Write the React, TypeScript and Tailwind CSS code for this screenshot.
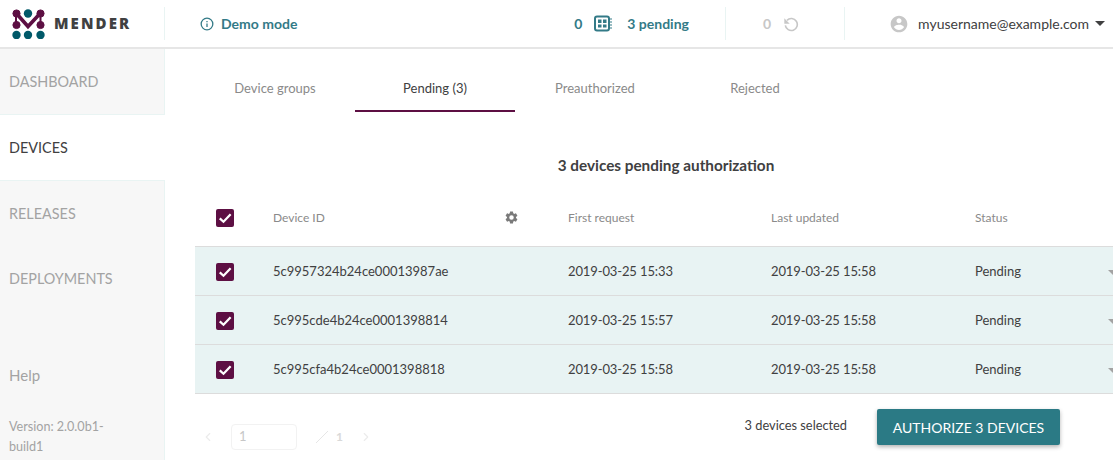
import { ChevronLeft, ChevronRight } from "lucide-react";

const devices = [
  { id: "5c9957324b24ce00013987ae", first: "2019-03-25 15:33", last: "2019-03-25 15:58" },
  { id: "5c995cde4b24ce0001398814", first: "2019-03-25 15:57", last: "2019-03-25 15:58" },
  { id: "5c995cfa4b24ce0001398818", first: "2019-03-25 15:58", last: "2019-03-25 15:58" },
];

function Logo() {
  return (
    <svg width="34" height="30" viewBox="0 0 34 30" className="shrink-0">
      <g fill="#5d0f43" stroke="#5d0f43">
        <path d="M4 4 L4 16 M28.5 4 L28.5 16" fill="none" strokeWidth="2" />
        <path d="M4 4 L16 17.5 L28.5 4" fill="none" strokeWidth="3.6" />
        <circle cx="4.5" cy="4.5" r="3.6" />
        <circle cx="28.5" cy="4.5" r="3.6" />
        <circle cx="4.5" cy="16" r="3.6" />
        <circle cx="28.5" cy="16" r="3.6" />
      </g>
      <circle cx="16" cy="4.5" r="4.2" fill="#015969" />
      <circle cx="4.5" cy="26" r="4.2" fill="#015969" />
      <circle cx="16" cy="26" r="4.2" fill="#015969" />
      <circle cx="28.5" cy="26" r="4.2" fill="#015969" />
    </svg>
  );
}

function Check() {
  return (
    <span className="flex h-[18px] w-[18px] items-center justify-center rounded-[2px] bg-[#5d0f43]">
      <svg width="18" height="18" viewBox="0 0 24 24">
        <path d="M5 12.5 L10 17 L19.5 7" fill="none" stroke="#fff" strokeWidth="3" />
      </svg>
    </span>
  );
}

function Tab({ label, active }: { label: string; active?: boolean }) {
  return (
    <div
      className={`flex h-[48px] w-[160px] items-center justify-center border-b-2 pt-[4px] text-[13px] ${
        active ? "border-[#5d0f43] text-[#404041]" : "border-transparent text-[#8a8a8a]"
      }`}
    >
      {label}
    </div>
  );
}

export default function App() {
  return (
    <div className="h-[460px] w-[1113px] overflow-hidden bg-white font-['Lato',sans-serif] text-[#404041]">
      <header className="flex h-[49px] items-center border-b-2 border-[#e6e6e6]">
        <div className="flex h-[33px] w-[165px] items-center border-r border-[#e9f4f3] pl-[12px]">
          <Logo />
          <span className="ml-[8px] font-['Open_Sans',sans-serif] text-[15px] font-extrabold tracking-[2.1px] text-[#404041]">
            MENDER
          </span>
        </div>
        <div className="ml-[35px] flex items-center text-[14px] font-bold text-[#337a87]">
          <svg width="14" height="14" viewBox="0 0 24 24" fill="none" stroke="#337a87" strokeWidth="2.2">
            <circle cx="12" cy="12" r="10" />
            <path d="M12 11v6M12 7v2" />
          </svg>
          <span className="ml-[7px]">Demo mode</span>
        </div>
        <div className="ml-auto flex h-[33px] items-center text-[14px]">
          <span className="font-bold text-[#337a87]">0</span>
          <svg width="18" height="18" viewBox="0 0 18 18" className="ml-[12px]">
            <rect x="1" y="1.5" width="14" height="14" rx="2" fill="none" stroke="#337a87" strokeWidth="2" />
            <rect x="4" y="4.5" width="3.5" height="3.5" fill="#337a87" />
            <rect x="9" y="4.5" width="3.5" height="3.5" fill="#337a87" />
            <rect x="4" y="9.5" width="3.5" height="3" fill="#337a87" />
            <rect x="9" y="9.5" width="3.5" height="3" fill="#337a87" />
            <path d="M16 4h2M16 7h2M16 10h2M16 13h2" stroke="#337a87" strokeWidth="1" />
          </svg>
          <span className="ml-[15px] font-bold text-[#337a87]">3 pending</span>
          <span className="ml-[36px] h-full border-l border-[#e9f4f3]" />
          <span className="ml-[37px] font-bold text-[#c7c7c7]">0</span>
          <svg width="16" height="16" viewBox="0 0 24 24" className="ml-[12px]" fill="none" stroke="#c7c7c7" strokeWidth="2.4">
            <path d="M6 6.5A9 9 0 1 1 3.5 14" />
            <path d="M2 3.5v8h8z" fill="#c7c7c7" stroke="none" />
          </svg>
          <span className="ml-[45px] h-full border-l border-[#e9f4f3]" />
          <svg width="20" height="20" viewBox="0 0 24 24" className="ml-[44px]" fill="#c7c7c7">
            <path d="M12 2C6.48 2 2 6.48 2 12s4.48 10 10 10 10-4.48 10-10S17.52 2 12 2zm0 3c1.66 0 3 1.34 3 3s-1.34 3-3 3-3-1.34-3-3 1.34-3 3-3zm0 14.2c-2.5 0-4.71-1.28-6-3.22.03-1.99 4-3.08 6-3.08 1.99 0 5.97 1.09 6 3.08-1.29 1.94-3.5 3.22-6 3.22z" />
          </svg>
          <span className="ml-[9px] text-[#404041]">myusername@example.com</span>
          <span className="ml-[6px] mr-[8px] h-0 w-0 border-x-[5px] border-t-[5px] border-x-transparent border-t-[#404041]" />
        </div>
      </header>
      <div className="flex h-[411px]">
        <aside className="flex w-[165px] shrink-0 flex-col border-r border-[#e9f4f3] bg-[#f7f7f7]">
          <div className="flex h-[66px] items-center border-b border-[#e9f4f3] pl-[9px] text-[14.4px] text-[#a3a3a3]">DASHBOARD</div>
          <div className="flex h-[66px] w-[165px] items-center border-b border-[#e9f4f3] bg-white pl-[9px] text-[14.4px] text-[#404041]">DEVICES</div>
          <div className="flex h-[66px] items-center pl-[9px] text-[14.4px] text-[#a3a3a3]">RELEASES</div>
          <div className="flex h-[64px] items-center pl-[9px] text-[14.4px] text-[#a3a3a3]">DEPLOYMENTS</div>
          <div className="mt-[53px] pl-[9px] text-[15px] text-[#a3a3a3]">Help</div>
          <div className="mt-[30px] w-[125px] pl-[9px] text-[12.6px] leading-[20px] text-[#a3a3a3]">
            Version: 2.0.0b1-build1
          </div>
        </aside>
        <main className="min-w-0 flex-1 pl-[30px]">
          <div className="mt-[15px] flex">
            <Tab label="Device groups" />
            <Tab label="Pending (3)" active />
            <Tab label="Preauthorized" />
            <Tab label="Rejected" />
          </div>
          <h2 className="mt-[43px] w-[942px] text-center text-[15.3px] font-bold leading-[20px] text-[#404041]">
            3 devices pending authorization
          </h2>
          <div className="mt-[14px] flex h-[57px] w-[918px] items-center text-[12px] text-[#8a8a8a]">
            <div className="w-[78px] shrink-0 pl-[21px]">
              <Check />
            </div>
            <div className="w-[231px] shrink-0">Device ID</div>
            <div className="w-[64px] shrink-0">
              <svg width="15" height="15" viewBox="0 0 24 24" fill="#7a7a7a">
                <path d="M19.14 12.94c.04-.3.06-.61.06-.94 0-.32-.02-.64-.07-.94l2.03-1.58a.49.49 0 0 0 .12-.61l-1.92-3.32a.49.49 0 0 0-.59-.22l-2.39.96c-.5-.38-1.03-.7-1.62-.94l-.36-2.54a.48.48 0 0 0-.48-.41h-3.84c-.24 0-.43.17-.47.41l-.36 2.54c-.59.24-1.13.57-1.62.94l-2.39-.96a.49.49 0 0 0-.59.22L2.74 8.87c-.12.21-.08.47.12.61l2.03 1.58c-.05.3-.09.63-.09.94s.02.64.07.94l-2.03 1.58a.49.49 0 0 0-.12.61l1.92 3.32c.12.22.37.29.59.22l2.39-.96c.5.38 1.03.7 1.62.94l.36 2.54c.05.24.24.41.48.41h3.84c.24 0 .44-.17.47-.41l.36-2.54c.59-.24 1.13-.56 1.62-.94l2.39.96c.22.08.47 0 .59-.22l1.92-3.32c.12-.22.07-.47-.12-.61l-2.01-1.58zM12 15.6A3.6 3.6 0 1 1 12 8.4a3.6 3.6 0 0 1 0 7.2z" />
              </svg>
            </div>
            <div className="w-[203px] shrink-0">First request</div>
            <div className="w-[204px] shrink-0">Last updated</div>
            <div>Status</div>
          </div>
          <div className="w-[918px] overflow-hidden border-t border-[#dcdcdc]">
            {devices.map((d) => (
              <div key={d.id} className="flex h-[49px] items-center border-b border-[#dcdcdc] bg-[#e8f3f3] pt-[2px] text-[13px] text-[#404041]">
                <div className="w-[78px] shrink-0 pl-[21px]">
                  <Check />
                </div>
                <div className="w-[295px] shrink-0">{d.id}</div>
                <div className="w-[203px] shrink-0 tracking-[-0.12px]">{d.first}</div>
                <div className="w-[204px] shrink-0 tracking-[-0.12px]">{d.last}</div>
                <div className="w-[133px] shrink-0">Pending</div>
                <span className="h-0 w-0 shrink-0 border-x-[5px] border-t-[5px] border-x-transparent border-t-[#a3a3a3]" />
              </div>
            ))}
          </div>
          <div className="mt-[15px] flex w-[865px] items-start">
            <div className="mt-[15px] flex items-center">
              <ChevronLeft size={14} className="ml-[6px] text-[#ececec]" />
              <div className="ml-[16px] flex h-[26px] w-[66px] items-center rounded-[4px] border border-[#f2f2f2] pl-[7px] text-[13px] text-[#c7c7c7]">
                1
              </div>
              <svg width="14" height="14" viewBox="0 0 14 14" className="ml-[18px]">
                <path d="M1 13 L13 1" stroke="#e6e6e6" strokeWidth="1" />
              </svg>
              <span className="ml-[7px] text-[12px] font-bold text-[#d9d9d9]">1</span>
              <ChevronRight size={14} className="ml-[16px] text-[#ececec]" />
            </div>
            <span className="ml-auto mt-[7px] text-[12.8px] text-[#404041]">3 devices selected</span>
            <button className="ml-[30px] h-[36px] w-[183px] rounded-[2px] bg-[#2b7a85] text-[14px] text-white shadow-[0_2px_4px_rgba(0,0,0,0.3)]">
              AUTHORIZE 3 DEVICES
            </button>
          </div>
        </main>
      </div>
    </div>
  );
}
